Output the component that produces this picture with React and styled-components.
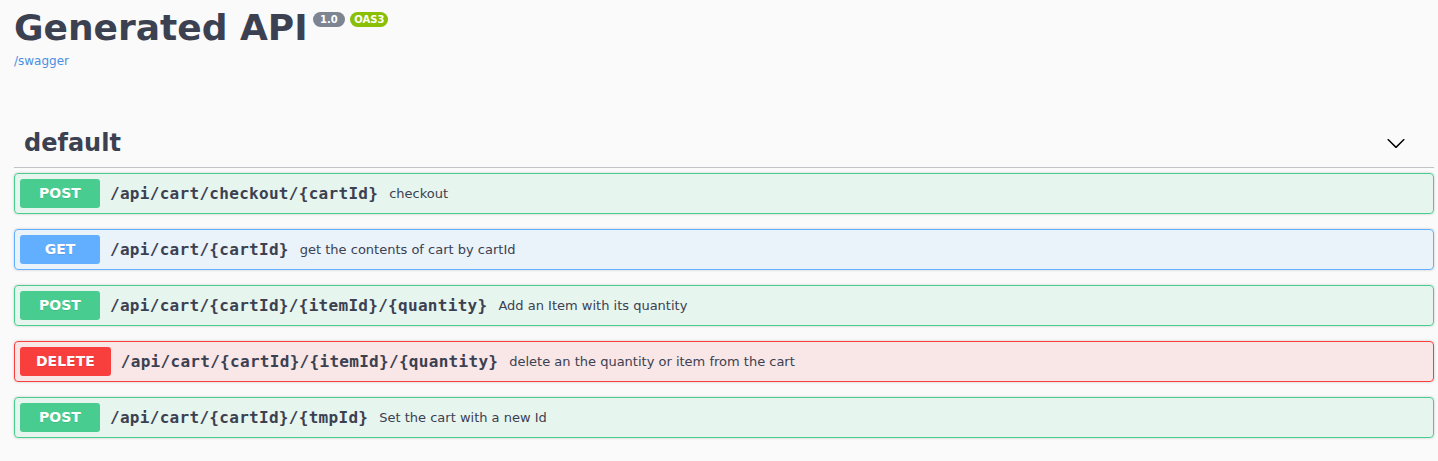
import React from 'react';
import styled, { createGlobalStyle } from 'styled-components';

const GlobalStyle = createGlobalStyle`
  html, body {
    margin: 0;
    padding: 0;
    background: #fafafa;
  }
  body {
    font-family: "DejaVu Sans", sans-serif;
    color: #3b4151;
  }
`;

const methodColors = {
  post: '#49cc90',
  get: '#61affe',
  delete: '#f93e3e',
};

const methodBgs = {
  post: 'rgba(73, 204, 144, 0.1)',
  get: 'rgba(97, 175, 254, 0.1)',
  delete: 'rgba(249, 62, 62, 0.1)',
};

const StyledWrapper = styled.div`
  padding: 0 4px 0 14px;
`;

const StyledInfo = styled.div`
  padding-top: 7px;
  margin-bottom: 50px;
`;

const StyledTitle = styled.h2`
  margin: 0;
  font-size: 36px;
  font-weight: 700;
  line-height: 42px;
  color: #3b4151;
  font-family: "DejaVu Sans", sans-serif;
`;

const StyledBadge = styled.small`
  display: inline-block;
  position: relative;
  top: -4px;
  vertical-align: super;
  margin-left: 5px;
  padding: 2px 4px;
  border-radius: 57px;
  font-size: 10px;
  line-height: 11px;
  background: ${({ $stamp }) => ($stamp ? '#89bf04' : '#7d8492')};
  & pre {
    margin: 0;
    padding: 0;
    color: #fff;
    font-family: "DejaVu Sans", sans-serif;
    font-weight: 700;
    white-space: pre;
  }
`;

const StyledLink = styled.a`
  display: inline-block;
  margin-top: 5px;
  font-size: 12px;
  color: #4990e2;
  text-decoration: none;
  font-family: "DejaVu Sans", sans-serif;
`;

const StyledTag = styled.h3`
  display: flex;
  align-items: center;
  margin: 0 0 5px;
  padding: 10px 20px 10px 10px;
  border-bottom: 1px solid rgba(59, 65, 81, 0.3);
  font-size: 24px;
  font-weight: 700;
  line-height: 28px;
  color: #3b4151;
  font-family: "DejaVu Sans", sans-serif;
  & span {
    flex: 1;
  }
  & svg {
    margin-right: 8px;
    fill: #000;
  }
`;

const StyledOpblock = styled.div`
  display: flex;
  align-items: center;
  margin: 0 0 15px;
  padding: 5px;
  border: 1px solid ${({ $method }) => methodColors[$method]};
  border-radius: 4px;
  background: ${({ $method }) => methodBgs[$method]};
  box-shadow: 0 0 3px rgba(0, 0, 0, 0.19);
`;

const StyledMethod = styled.span`
  box-sizing: border-box;
  min-width: 80px;
  padding: 6px 16px;
  border-radius: 3px;
  background: ${({ $method }) => methodColors[$method]};
  color: #fff;
  font-family: "DejaVu Sans", sans-serif;
  font-size: 14px;
  font-weight: 700;
  line-height: 17px;
  text-align: center;
  text-shadow: 0 1px 0 rgba(0, 0, 0, 0.1);
`;

const StyledPath = styled.span`
  padding: 0 11px 0 10px;
  font-family: "DejaVu Sans Mono", monospace;
  font-size: 16px;
  font-weight: 700;
  letter-spacing: 0.3px;
  color: #3b4151;
`;

const StyledDescription = styled.span`
  flex: 1;
  font-size: 13px;
  color: #3b4151;
  font-family: "DejaVu Sans", sans-serif;
`;

const operations = [
  { method: 'post', path: '/api/cart/checkout/{cartId}', summary: 'checkout' },
  { method: 'get', path: '/api/cart/{cartId}', summary: 'get the contents of cart by cartId' },
  { method: 'post', path: '/api/cart/{cartId}/{itemId}/{quantity}', summary: 'Add an Item with its quantity' },
  { method: 'delete', path: '/api/cart/{cartId}/{itemId}/{quantity}', summary: 'delete an the quantity or item from the cart' },
  { method: 'post', path: '/api/cart/{cartId}/{tmpId}', summary: 'Set the cart with a new Id' },
];

const Arrow = () => (
  <svg width="20" height="20" viewBox="0 0 20 20" aria-hidden="true">
    <path d="M17.418 6.109c.272-.268.709-.268.979 0s.271.701 0 .969l-7.908 7.83c-.27.268-.707.268-.979 0l-7.908-7.83c-.27-.268-.27-.701 0-.969.271-.268.709-.268.979 0L10 13.25l7.418-7.141z" />
  </svg>
);

const App = () => (
  <StyledWrapper>
    <GlobalStyle />
    <StyledInfo>
      <StyledTitle>
        Generated API
        <StyledBadge>
          <pre> 1.0 </pre>
        </StyledBadge>
        <StyledBadge $stamp>
          <pre>OAS3</pre>
        </StyledBadge>
      </StyledTitle>
      <StyledLink href="#">/swagger</StyledLink>
    </StyledInfo>
    <StyledTag>
      <span>default</span>
      <Arrow />
    </StyledTag>
    {operations.map((op, i) => (
      <StyledOpblock key={i} $method={op.method}>
        <StyledMethod $method={op.method}>{op.method.toUpperCase()}</StyledMethod>
        <StyledPath>{op.path}</StyledPath>
        <StyledDescription>{op.summary}</StyledDescription>
      </StyledOpblock>
    ))}
  </StyledWrapper>
);

export default App;
